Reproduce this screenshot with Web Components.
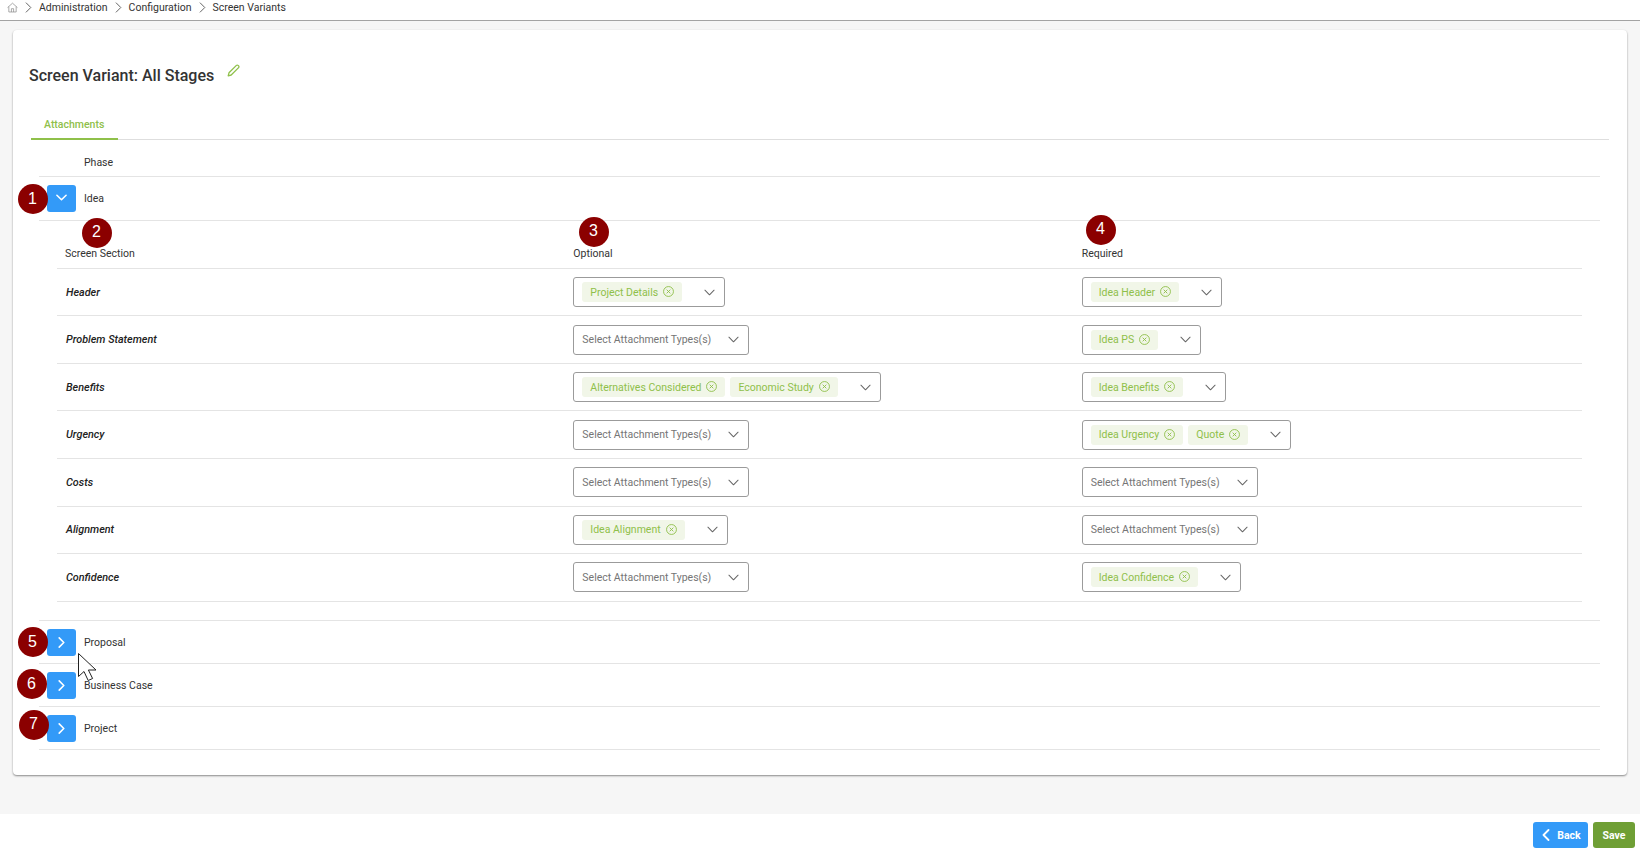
<!DOCTYPE html>
<html>
<head>
<meta charset="utf-8">
<title>Screen Variants</title>
<style>
    html, body { margin: 0; height: 100%; }
    body {
        position: relative;
        width: 1640px;
        height: 852px;
        overflow: hidden;
        display: flex;
        flex-direction: column;
        background: #f6f6f6;
        color: #333;
        font: 400 10.5px Roboto, "Liberation Sans", sans-serif;
    }
</style>
</head>
<body>
    <bread-crumbs>
        <span>Administration</span>
        <span>Configuration</span>
        <span>Screen Variants</span>
    </bread-crumbs>

    <page-main>
        <variant-card heading="Screen Variant: All Stages">
            <tab-strip>Attachments</tab-strip>
            <phase-head>Phase</phase-head>

            <phase-row open tall>Idea</phase-row>
            <section-table>
                <section-row head>
                    <span slot="label">Screen Section</span>
                    <span slot="optional">Optional</span>
                    <span slot="required">Required</span>
                </section-row>
                <section-row>
                    <span slot="label">Header</span>
                    <tag-select slot="optional"><tag-chip>Project Details</tag-chip></tag-select>
                    <tag-select slot="required"><tag-chip>Idea Header</tag-chip></tag-select>
                </section-row>
                <section-row>
                    <span slot="label">Problem Statement</span>
                    <tag-select slot="optional"></tag-select>
                    <tag-select slot="required"><tag-chip>Idea PS</tag-chip></tag-select>
                </section-row>
                <section-row>
                    <span slot="label">Benefits</span>
                    <tag-select slot="optional"><tag-chip>Alternatives Considered</tag-chip><tag-chip>Economic Study</tag-chip></tag-select>
                    <tag-select slot="required"><tag-chip>Idea Benefits</tag-chip></tag-select>
                </section-row>
                <section-row>
                    <span slot="label">Urgency</span>
                    <tag-select slot="optional"></tag-select>
                    <tag-select slot="required"><tag-chip>Idea Urgency</tag-chip><tag-chip>Quote</tag-chip></tag-select>
                </section-row>
                <section-row>
                    <span slot="label">Costs</span>
                    <tag-select slot="optional"></tag-select>
                    <tag-select slot="required"></tag-select>
                </section-row>
                <section-row>
                    <span slot="label">Alignment</span>
                    <tag-select slot="optional"><tag-chip>Idea Alignment</tag-chip></tag-select>
                    <tag-select slot="required"></tag-select>
                </section-row>
                <section-row>
                    <span slot="label">Confidence</span>
                    <tag-select slot="optional"></tag-select>
                    <tag-select slot="required"><tag-chip>Idea Confidence</tag-chip></tag-select>
                </section-row>
            </section-table>

            <phase-row>Proposal</phase-row>
            <phase-row>Business Case</phase-row>
            <phase-row>Project</phase-row>
        </variant-card>
    </page-main>

    <foot-bar></foot-bar>

    <num-badge x="32.5" y="199">1</num-badge>
    <num-badge x="96.5" y="232.5">2</num-badge>
    <num-badge x="593.5" y="231.5">3</num-badge>
    <num-badge x="1100.5" y="229.5">4</num-badge>
    <num-badge x="32.5" y="642">5</num-badge>
    <num-badge x="31.5" y="684">6</num-badge>
    <num-badge x="33.5" y="724.5">7</num-badge>
    <mouse-cursor></mouse-cursor>

<script>
const chevron = (d, color, size, weight = 1.2) => `<svg width="${size}" height="${size}" viewBox="0 0 12 12" fill="none" stroke="${color}" stroke-width="${weight}" stroke-linecap="round" stroke-linejoin="round"><path d="${d}"/></svg>`
const CHEVRON_DOWN = 'M1 3.5 6 8.5 11 3.5'
const CHEVRON_RIGHT = 'M3.5 1 8.5 6 3.5 11'
const CHEVRON_LEFT = 'M8.5 1 3.5 6 8.5 11'

class BreadCrumbs extends HTMLElement {
    connectedCallback() {
        this.attachShadow({mode: 'open'})
        this.shadowRoot.innerHTML = `
        <style>
            :host {
                display: flex;
                align-items: center;
                flex: none;
                box-sizing: border-box;
                height: 21px;
                padding: 0 0 6px 7px;
                background: #fff;
                border-bottom: 1px solid #a3a3a3;
                color: #333;
            }
            svg { display: block; flex: none; }
            .sep { margin: 0 5px; }
        </style>
        <svg width="11" height="11" viewBox="0 0 12 11" fill="none" stroke="#8a8a8a" stroke-width=".8"><path d="M.6 5.6 6 .8l5.4 4.8M2 4.600v5.800h8V4.600M4.800 10.400V6.800h2.400v3.600"/></svg>`
        // a separator before every crumb
        ;[...this.children].forEach((crumb, i) => {
            crumb.slot = 'c' + i
            const sep = document.createElement('span')
            sep.className = 'sep'
            sep.innerHTML = chevron(CHEVRON_RIGHT, '#555', 11, 1)
            const s = document.createElement('slot')
            s.name = 'c' + i
            this.shadowRoot.append(sep, s)
        })
    }
}

class PageMain extends HTMLElement {
    connectedCallback() {
        this.attachShadow({mode: 'open'})
        this.shadowRoot.innerHTML = `
        <style>
            :host { display: block; flex: 1; padding: 9px 13px 0; min-height: 0; }
        </style>
        <slot></slot>`
    }
}

class VariantCard extends HTMLElement {
    connectedCallback() {
        this.attachShadow({mode: 'open'})
        const heading = this.getAttribute('heading')
        this.shadowRoot.innerHTML = `
        <style>
            :host {
                display: block;
                box-sizing: border-box;
                height: 745px;
                padding: 0 18px 0 16px;
                background: #fff;
                border-radius: 4px;
                box-shadow: 0 1px 2px rgba(0,0,0,.45);
            }
            .title {
                display: flex;
                align-items: flex-start;
                height: 66px;
                padding: 36px 0 0;
                box-sizing: border-box;
                font-size: 16px;
                font-weight: 500;
                line-height: 20px;
                color: #333;
            }
            svg { margin: -2px 0 0 13px; display: block; }
        </style>
        <div class="title">
            <span>${heading}</span>
            <svg width="13" height="13" viewBox="0 0 13 13" fill="none" stroke="#8fc04a" stroke-width="1.3" stroke-linejoin="round"><path d="M1.200 11.800l.8-3L9.400 1.400a1.200 1.200 0 0 1 1.700 0l.5.5a1.200 1.200 0 0 1 0 1.700L4.200 11l-3 .8z"/></svg>
        </div>
        <slot></slot>`
    }
}

class TabStrip extends HTMLElement {
    connectedCallback() {
        this.attachShadow({mode: 'open'})
        this.shadowRoot.innerHTML = `
        <style>
            :host {
                display: block;
                margin: 0 0 0 2px;
                border-bottom: 1px solid #dedede;
            }
            .tab {
                display: inline-block;
                box-sizing: border-box;
                height: 44px;
                margin-bottom: -1px;
                padding: 22px 14px 0 13px;
                line-height: 14px;
                font-weight: 500;
                color: #8fc04a;
                border-bottom: 2px solid #8fc04a;
                vertical-align: top;
            }
        </style>
        <div class="tab"><slot></slot></div>`
    }
}

class PhaseHead extends HTMLElement {
    connectedCallback() {
        this.attachShadow({mode: 'open'})
        this.shadowRoot.innerHTML = `
        <style>
            :host {
                display: flex;
                align-items: center;
                box-sizing: border-box;
                height: 37px;
                margin: 0 9px 0 10px;
                padding: 8px 0 0 45px;
                border-bottom: 1px solid #e4e4e4;
            }
        </style>
        <slot></slot>`
    }
}

class PhaseRow extends HTMLElement {
    connectedCallback() {
        this.attachShadow({mode: 'open'})
        const open = this.hasAttribute('open')
        this.shadowRoot.innerHTML = `
        <style>
            :host {
                display: flex;
                align-items: center;
                gap: 8px;
                box-sizing: border-box;
                height: ${this.hasAttribute('tall') ? 44 : 43}px;
                margin: 0 9px 0 10px;
                padding: 0 0 0 8px;
                border-bottom: 1px solid #e4e4e4;
            }
            .toggle {
                display: flex;
                align-items: center;
                justify-content: center;
                width: 29px;
                height: 27px;
                padding: 0 0 ${open ? 2 : 0}px;
                box-sizing: border-box;
                background: #339af8;
                border-radius: 3px;
            }
        </style>
        <div class="toggle">${chevron(open ? CHEVRON_DOWN : CHEVRON_RIGHT, '#fff', 11, 1.7)}</div>
        <slot></slot>`
    }
}

class SectionTable extends HTMLElement {
    connectedCallback() {
        this.attachShadow({mode: 'open'})
        this.shadowRoot.innerHTML = `
        <style>
            :host {
                display: block;
                box-sizing: border-box;
                height: 400px;
                margin: 0 9px 0 10px;
                padding: 0 18px;
                border-bottom: 1px solid #e4e4e4;
            }
        </style>
        <slot></slot>`
    }
}

class SectionRow extends HTMLElement {
    connectedCallback() {
        this.attachShadow({mode: 'open'})
        const head = this.hasAttribute('head')
        this.shadowRoot.innerHTML = `
        <style>
            :host {
                display: grid;
                grid-template-columns: repeat(3, 1fr);
                box-sizing: border-box;
                height: ${head ? 47.8 : 47.55}px;
                border-bottom: 1px solid #e4e4e4;
            }
            .cell {
                display: flex;
                align-items: ${head ? 'flex-end' : 'center'};
                padding: ${head ? '0 8px 8px' : '0 8px'};
                min-width: 0;
            }
            .label {
                ${head ? '' : 'padding-left: 9px; font-style: italic; font-weight: 500; font-size: 10.8px; color: #222;'}
            }
        </style>
        <div class="cell label"><slot name="label"></slot></div>
        <div class="cell"><slot name="optional"></slot></div>
        <div class="cell"><slot name="required"></slot></div>`
    }
}

class TagSelect extends HTMLElement {
    connectedCallback() {
        this.attachShadow({mode: 'open'})
        const empty = this.children.length === 0
        this.shadowRoot.innerHTML = `
        <style>
            :host {
                display: inline-flex;
                align-items: center;
                box-sizing: border-box;
                height: 30px;
                padding: 0 9px 0 8px;
                border: 1px solid #9b9b9b;
                border-radius: 3px;
                background: #fff;
                color: #757575;
            }
            .tags { display: flex; align-items: center; gap: 5px; }
            svg { display: block; margin-left: ${empty ? 17 : 22}px; flex: none; }
        </style>
        <div class="tags"><slot>Select Attachment Types(s)</slot></div>
        ${chevron(CHEVRON_DOWN, '#666', 11, 1.1)}`
    }
}

class TagChip extends HTMLElement {
    connectedCallback() {
        this.attachShadow({mode: 'open'})
        this.shadowRoot.innerHTML = `
        <style>
            :host {
                display: inline-flex;
                align-items: center;
                gap: 5px;
                box-sizing: border-box;
                height: 20px;
                padding: 0 8px;
                background: #f1f6e8;
                border-radius: 3px;
                color: #8fc04a;
                white-space: nowrap;
            }
            svg { display: block; flex: none; margin-top: -1px; }
        </style>
        <slot></slot>
        <svg width="11" height="11" viewBox="0 0 12 12" fill="none" stroke="#8fc04a" stroke-width="1"><circle cx="6" cy="6" r="5.400"/><path d="M4 4l4 4M8 4 4 8"/></svg>`
    }
}

class FootBar extends HTMLElement {
    connectedCallback() {
        this.attachShadow({mode: 'open'})
        this.shadowRoot.innerHTML = `
        <style>
            :host {
                display: flex;
                justify-content: flex-end;
                align-items: flex-start;
                gap: 5px;
                flex: none;
                box-sizing: border-box;
                height: 38px;
                padding: 8px 5px 0 0;
                background: #fff;
            }
            .btn {
                display: flex;
                align-items: center;
                justify-content: center;
                gap: 5px;
                height: 26px;
                border-radius: 3px;
                color: #fff;
                font-weight: 700;
            }
            .back { width: 55px; background: #339af8; }
            .save { width: 42px; background: #6f9f35; }
        </style>
        <div class="btn back">${chevron(CHEVRON_LEFT, '#fff', 12, 1.8)}<span>Back</span></div>
        <div class="btn save"><span>Save</span></div>`
    }
}

class NumBadge extends HTMLElement {
    connectedCallback() {
        this.attachShadow({mode: 'open'})
        this.style.left = (this.getAttribute('x') - 15) + 'px'
        this.style.top = (this.getAttribute('y') - 15) + 'px'
        this.shadowRoot.innerHTML = `
        <style>
            :host {
                position: absolute;
                display: flex;
                align-items: center;
                justify-content: center;
                box-sizing: border-box;
                width: 30px;
                height: 30px;
                padding-bottom: 1px;
                border-radius: 50%;
                background: #8b0000;
                color: #fff;
                font: 400 16px "Liberation Sans", sans-serif;
            }
        </style>
        <slot></slot>`
    }
}

class MouseCursor extends HTMLElement {
    connectedCallback() {
        this.attachShadow({mode: 'open'})
        this.shadowRoot.innerHTML = `
        <style>
            :host { position: absolute; left: 78px; top: 653px; width: 19px; height: 28px; }
            svg { display: block; }
        </style>
        <svg width="19" height="28" viewBox="0 0 19 28"><path d="M.5.5v23l5.500-5 4.200 9 4.400-2-4.200-8.500h7.600z" fill="#fff" stroke="#222" stroke-width="1"/></svg>`
    }
}

window.customElements.define('bread-crumbs', BreadCrumbs)
window.customElements.define('page-main', PageMain)
window.customElements.define('variant-card', VariantCard)
window.customElements.define('tab-strip', TabStrip)
window.customElements.define('phase-head', PhaseHead)
window.customElements.define('phase-row', PhaseRow)
window.customElements.define('section-table', SectionTable)
window.customElements.define('section-row', SectionRow)
window.customElements.define('tag-select', TagSelect)
window.customElements.define('tag-chip', TagChip)
window.customElements.define('foot-bar', FootBar)
window.customElements.define('num-badge', NumBadge)
window.customElements.define('mouse-cursor', MouseCursor)
</script>
</body>
</html>
